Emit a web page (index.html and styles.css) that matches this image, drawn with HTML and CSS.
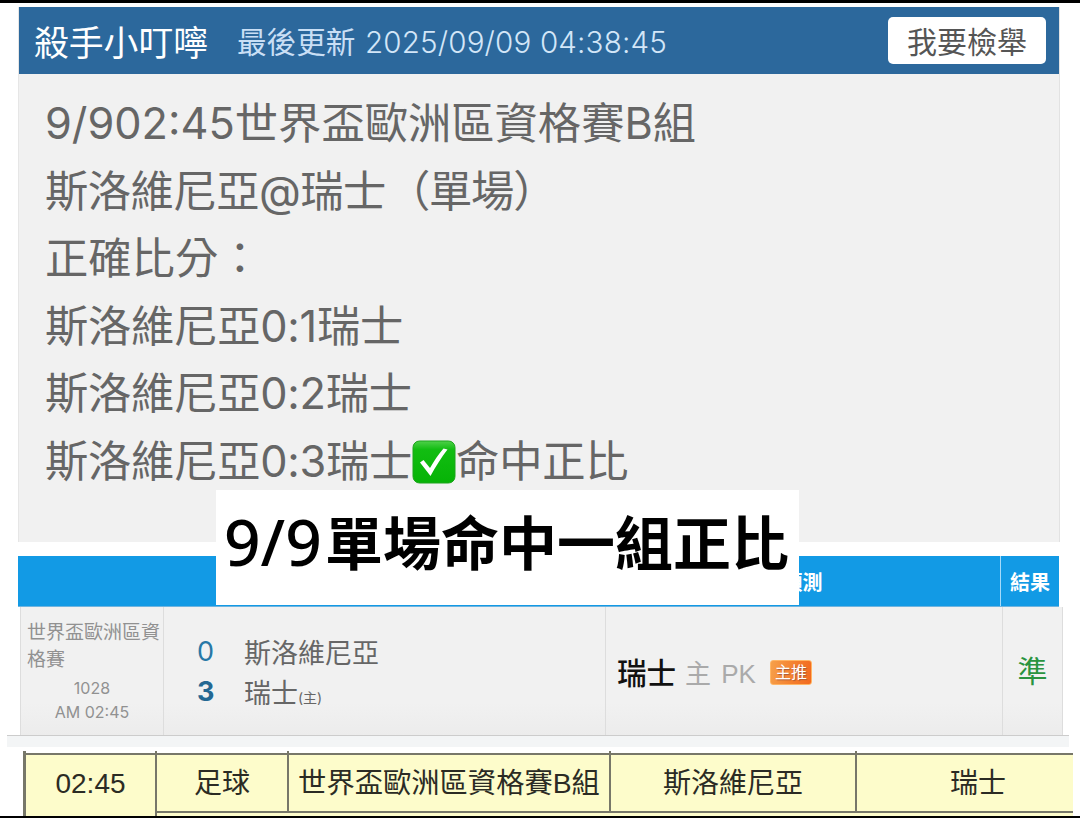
FILE: index.html
```html
<!DOCTYPE html>
<html lang="zh-Hant">
<head>
    <meta charset="UTF-8">
    <meta name="viewport" content="width=device-width, initial-scale=1.0">
    <title>殺手小叮嚀</title>
    <link rel="stylesheet" href="styles.css">
</head>
<body>

    <div class="page">

        <!-- Post -->
        <div class="post">
            <div class="post-header">
                <span class="author">殺手小叮嚀</span>
                <span class="updated">最後更新</span>
                <span class="updated-time">2025/09/09 04:38:45</span>
                <button type="button" class="report">我要檢舉</button>
            </div>
            <div class="post-body">
                <p>9/902:45世界盃歐洲區資格賽B組</p>
                <p><span class="at">斯洛維尼亞@瑞士</span><span class="paren">（單場）</span></p>
                <p>正確比分：</p>
                <p class="tight">斯洛維尼亞0:1瑞士</p>
                <p class="tight">斯洛維尼亞0:2瑞士</p>
                <p class="tight">斯洛維尼亞0:3瑞士<svg class="check" viewBox="0 0 44 44">
                    <defs>
                        <linearGradient id="green" x1="0" y1="0" x2="0" y2="1">
                            <stop offset="0" stop-color="#4fd04a"/>
                            <stop offset="0.2" stop-color="#12bd12"/>
                            <stop offset="1" stop-color="#06b306"/>
                        </linearGradient>
                    </defs>
                    <rect x="1" y="1" width="42" height="42" rx="6.5" fill="url(#green)" stroke="#1da51d"/>
                    <path d="M8 22.5 L11.5 20 L18 28 C22 21 26 15 31.5 8.5 L35.5 9.5 C29 18 24 26 18.5 36 Z" fill="#fff"/>
                </svg>命中正比</p>
            </div>
        </div>

        <div class="banner"><span class="date">9/9</span>單場命中一組正比</div>

        <!-- Prediction result -->
        <div class="result-head">
            <div class="head-cell"></div>
            <div class="head-cell">預測</div>
            <div class="head-cell last">結果</div>
        </div>
        <div class="result-row">
            <div class="match">
                <div class="league">世界盃歐洲區資格賽</div>
                <div class="match-no">1028</div>
                <div class="match-time">AM 02:45</div>
            </div>
            <div class="teams">
                <span class="score">0</span>
                <span>斯洛維尼亞</span>
                <span class="score win">3</span>
                <span>瑞士<small>(主)</small></span>
            </div>
            <div class="pick">
                <span class="pick-team">瑞士</span>
                <span class="pick-type">主 PK</span>
                <span class="tag">主推</span>
            </div>
            <div class="hit">準</div>
        </div>
        <div class="strip"></div>

        <!-- Schedule -->
        <div class="schedule">
            <div class="slot time">02:45</div>
            <div class="slot">足球</div>
            <div class="slot event">世界盃歐洲區資格賽B組</div>
            <div class="slot">斯洛維尼亞</div>
            <div class="slot">瑞士</div>
        </div>

    </div>

</body>
</html>
```
FILE: styles.css
```css
* {
    box-sizing: border-box;
}

body {
    margin: 0;
    background: #fff;
    font-family: Inter, "Noto Sans CJK TC", sans-serif;
    color: #666;
}

.page {
    position: relative;
    height: 818px;
    padding-top: 4px;
    border-top: 3px solid #000;
    border-bottom: 2px solid #000;
    overflow: hidden;
}

/* Post */
.post {
    width: 1042px;
    height: 535px;
    margin-left: 18px;
    background: #f1f1f1;
    border-left: 1px solid #e6e6e6;
    border-right: 1px solid #e2e2e2;
}

.post-header {
    display: flex;
    align-items: center;
    height: 67px;
    padding: 0 13px 0 15px;
    background: #2c689c;
    white-space: nowrap;
}

.author {
    width: 203px;
    font-size: 34.8px;
    color: #fff;
}

.updated {
    width: 128px;
    font-size: 29.6px;
    color: #c9dff5;
}

.updated-time {
    padding-top: 2px;
    font-size: 29.6px;
    font-weight: 300;
    letter-spacing: 0.15px;
    color: #d3e6f8;
}

.report {
    width: 158px;
    height: 47px;
    margin-left: auto;
    padding: 0 0 2px;
    border: none;
    border-radius: 5px;
    background: #fff;
    color: #555;
    font-family: inherit;
    font-size: 30px;
}

.post-body {
    padding: 16px 26px;
}

.post-body p {
    height: 67.6px;
    margin: 0;
    font-size: 43.3px;
    line-height: 67.6px;
    white-space: nowrap;
}

.at {
    letter-spacing: -0.5px;
}

.paren {
    margin-left: 1px;
    letter-spacing: -1.2px;
}

.post-body .tight {
    letter-spacing: -0.25px;
}

.check {
    width: 44px;
    height: 44px;
    vertical-align: -7px;
}

/* Caption over the post and the table */
.banner {
    position: absolute;
    left: 216px;
    top: 487px;
    display: flex;
    align-items: center;
    width: 583px;
    height: 115px;
    padding: 0 0 8px 8px;
    background: #fff;
    color: #000;
    font-size: 58px;
    font-weight: bold;
    line-height: 1;
    white-space: nowrap;
}

.date {
    width: 101px;
    padding-bottom: 4px;
    font-family: "Noto Sans", sans-serif;
    font-size: 64px;
    font-weight: 500;
}

/* Prediction result */
.result-head {
    display: grid;
    grid-template-columns: 587px 395px 59px;
    width: 1041px;
    height: 51px;
    margin: 14px 0 0 18px;
    background: #129ae5;
    border-bottom: 1px solid #6fb4df;
}

.head-cell {
    display: flex;
    align-items: center;
    justify-content: center;
    color: #fff;
    font-size: 20px;
    font-weight: bold;
}

.last {
    border-left: 1px solid #a5dafa;
}

.result-row {
    display: grid;
    grid-template-columns: 143px 442px 397px 60px;
    width: 1043px;
    height: 128px;
    margin-left: 20px;
    background: linear-gradient(#f1f1f1 75%, #ececec);
    border-left: 1px solid #ddd;
}

.result-row > div {
    border-right: 1px solid #ddd;
}

.match {
    padding-top: 12px;
    color: #919191;
    font-size: 16px;
    text-align: center;
}

.league {
    padding-left: 6px;
    font-size: 19px;
    line-height: 27px;
    text-align: left;
    word-break: break-all;
}

.match-no {
    margin-top: 3px;
    line-height: 24px;
}

.match-time {
    line-height: 24px;
}

.teams {
    display: grid;
    grid-template-columns: 47px auto;
    grid-template-rows: 40px 40px;
    align-content: center;
    align-items: center;
    padding: 1px 0 0 33px;
    font-size: 27px;
}

.score {
    color: #2878a6;
}

.win {
    color: #246893;
    font-weight: bold;
}

.teams small {
    font-size: 14px;
}

.pick {
    display: flex;
    align-items: center;
    padding-left: 11px;
    font-size: 25px;
}

.pick-team {
    width: 68px;
    color: #111;
    font-size: 29.6px;
    font-weight: 500;
}

.pick-type {
    width: 85px;
    color: #aaa;
    font-family: "Liberation Sans", "Noto Sans CJK TC", sans-serif;
    font-size: 26px;
    word-spacing: 3px;
}

.tag {
    width: 42px;
    height: 25px;
    margin-top: 2px;
    border: 1px solid #ffb565;
    border-radius: 3px;
    background: linear-gradient(100deg, #f6a04a, #f47d2c 60%, #f2691f);
    color: #fff;
    font-size: 16px;
    line-height: 22px;
    text-align: center;
    text-shadow: 1px 1px 1px #a85a38;
}

.hit {
    display: flex;
    align-items: center;
    justify-content: center;
    padding-bottom: 4px;
    color: #2a9440;
    font-size: 30px;
}

.strip {
    width: 1062px;
    height: 12px;
    margin-left: 7px;
    border-top: 1px solid #ccc;
    background: #f3f5f6;
}

/* Schedule */
.schedule {
    display: grid;
    grid-template-columns: 134px 132px 322px 246px 216px;
    width: 1050px;
    height: 65px;
    margin: 4px 0 0 23px;
    background: linear-gradient(#fff 2px, #777769 2px, #777769 4px, #fdfccb 4px);
    font-family: "Liberation Sans", "Noto Sans CJK TC", sans-serif;
}

.slot {
    height: 62px;
    padding-top: 6px;
    border-right: 2px solid #777769;
    border-bottom: 2px solid #777769;
    color: #2b2b24;
    font-size: 28px;
    line-height: 53px;
    text-align: center;
    white-space: nowrap;
}

.slot:last-child {
    padding-left: 26px;
    border-right: none;
}

.time {
    height: 65px;
    border-left: 3px solid #777769;
    border-bottom: none;
}

.event {
    font-size: 28.3px;
}
```
